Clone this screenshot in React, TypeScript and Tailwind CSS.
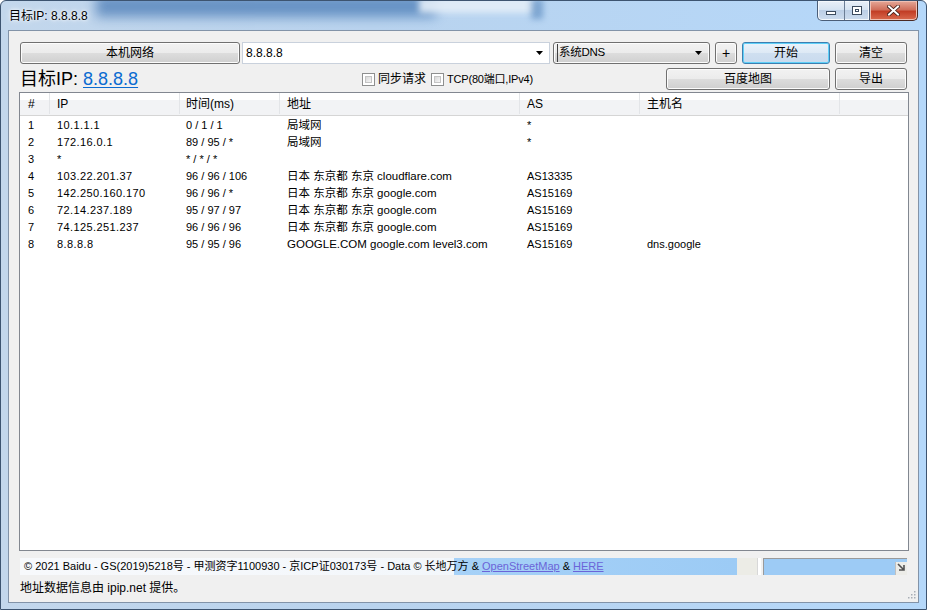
import React from 'react';

const FONT = "font-['Liberation_Sans','Noto_Sans_CJK_SC',sans-serif]";
const BTN =
  'flex items-center justify-center rounded-[3px] border border-[#707070] bg-[linear-gradient(#f2f2f2,#ebebeb_50%,#dddddd_50%,#cfcfcf)] shadow-[inset_0_0_0_1px_#fcfcfc] text-[12px] text-black';

const cols = [
  { label: '#', w: 'w-[30px] pl-[8px]' },
  { label: 'IP', w: 'w-[130px] pl-[7px]' },
  { label: '时间(ms)', w: 'w-[100px] pl-[6px]' },
  { label: '地址', w: 'w-[240px] pl-[7px]' },
  { label: 'AS', w: 'w-[120px] pl-[7px]' },
  { label: '主机名', w: 'w-[200px] pl-[7px]' },
];

const rows = [
  ['1', '10.1.1.1', '0 / 1 / 1', '局域网', '*', ''],
  ['2', '172.16.0.1', '89 / 95 / *', '局域网', '*', ''],
  ['3', '*', '* / * / *', '', '', ''],
  ['4', '103.22.201.37', '96 / 96 / 106', '日本 东京都 东京 cloudflare.com', 'AS13335', ''],
  ['5', '142.250.160.170', '96 / 96 / *', '日本 东京都 东京 google.com', 'AS15169', ''],
  ['6', '72.14.237.189', '95 / 97 / 97', '日本 东京都 东京 google.com', 'AS15169', ''],
  ['7', '74.125.251.237', '96 / 96 / 96', '日本 东京都 东京 google.com', 'AS15169', ''],
  ['8', '8.8.8.8', '95 / 95 / 96', 'GOOGLE.COM google.com level3.com', 'AS15169', 'dns.google'],
];

const Arrow = () => (
  <svg width="7" height="4" viewBox="0 0 7 4">
    <path d="M0 0h7L3.5 4z" fill="#000" />
  </svg>
);

const CheckBox = ({ label, cls }: { label: string; cls: string }) => (
  <div className="flex items-center gap-[3px]">
    <div className="w-[13px] h-[13px] border border-[#8e8f8f] bg-white p-[2px]">
      <div className="w-full h-full border border-[#c4c4c4] bg-[linear-gradient(135deg,#d8d8d8,#f6f6f6)]" />
    </div>
    <span className={cls}>{label}</span>
  </div>
);

function TitleBar() {
  return (
    <div className="relative h-[29px] flex items-start">
      <div className="absolute left-[95px] top-[-6px] w-[340px] h-[22px] bg-[#3a6fae] opacity-65 blur-[6px]" />
      <div className="absolute left-[418px] top-[-4px] w-[116px] h-[16px] bg-[#e4eef8] opacity-90 blur-[3px]" />
      <div className="absolute left-[530px] top-[-2px] w-[12px] h-[20px] bg-[#3e74b0] opacity-50 blur-[3px]" />
      <span className="relative mt-[6px] ml-[8px] text-[12px] text-black [text-shadow:0_0_6px_#ffffff,0_0_3px_#ffffff]">
        目标IP: 8.8.8.8
      </span>
      <div className="relative ml-auto mr-[8px] flex h-[20px]">
        <div className="flex w-[53px] border border-t-0 border-[#4b5e78] rounded-bl-[5px] overflow-hidden bg-[linear-gradient(#e9f0f8,#d4e2f1_50%,#bccfe6_50%,#cddcee)] shadow-[inset_0_0_0_1px_#f4f8fc]">
          <div className="w-[27px] flex items-center justify-center border-r border-[#6b7d95]">
            <div className="w-[10px] h-[4px] border border-[#3c4b5e] bg-white mt-[5px]" />
          </div>
          <div className="flex-1 flex items-center justify-center">
            <div className="w-[10px] h-[9px] border border-[#3c4b5e] bg-white">
              <div className="mt-[2px] mx-[2px] h-[3px] border border-[#3c4b5e]" />
            </div>
          </div>
        </div>
        <div className="w-[48px] flex items-center justify-center border border-t-0 border-l-0 border-[#4b2a24] rounded-br-[5px] bg-[linear-gradient(#e5a898,#d0705c_45%,#c23e26_55%,#d96a4e)] shadow-[inset_0_0_0_1px_#eec0b4]">
          <svg width="13" height="11" viewBox="0 0 13 11">
            <path d="M2 1.5l9 8M11 1.5l-9 8" stroke="#3b1a14" strokeWidth="3.6" strokeLinecap="square" />
            <path d="M2 1.5l9 8M11 1.5l-9 8" stroke="#ffffff" strokeWidth="2" strokeLinecap="square" />
          </svg>
        </div>
      </div>
    </div>
  );
}

export default function App() {
  return (
    <div
      className={`w-[927px] h-[610px] flex flex-col overflow-hidden rounded-t-[6px] border border-[#3d5470] bg-[linear-gradient(to_right,#c3d7ec,#b9d3ee_40%,#b5d8fa)] ${FONT}`}
    >
      <TitleBar />
      <div className="mx-[7px] h-[573px] flex flex-col border border-[#8293a8] bg-[#f0f0f0] px-[11px]">
        {/* top row */}
        <div className="mt-[11px] flex h-[22px]">
          <div className={`${BTN} w-[220px]`}>本机网络</div>
          <div className="ml-[2px] w-[308px] flex items-center border border-[#c9d1dc] bg-white pl-[3px] pr-[6px] text-[12px]">
            <span>8.8.8.8</span>
            <span className="ml-auto">
              <Arrow />
            </span>
          </div>
          <div className={`${BTN} ml-[3px] w-[157px] justify-start pl-[3px] pr-[7px]`}>
            <span className="border-l border-[#404040] pl-[1px] text-[11.5px] tracking-[-0.3px]">系统DNS</span>
            <span className="ml-auto">
              <Arrow />
            </span>
          </div>
          <div className={`${BTN} ml-[5px] w-[22px] text-[14px] text-[#101860]`}>+</div>
          <div className="ml-[5px] w-[88px] flex items-center justify-center rounded-[3px] border border-[#3c7fb1] bg-[linear-gradient(#eaf3fb,#dde9f5_50%,#cfdff0_50%,#c9dbee)] shadow-[inset_0_0_0_1px_#5fd0f8] text-[12px]">
            开始
          </div>
          <div className={`${BTN} ml-[5px] w-[72px]`}>清空</div>
        </div>

        {/* second row */}
        <div className="mt-[4px] flex h-[22px] items-center">
          <div className="w-[330px] text-[18px] leading-none whitespace-nowrap">
            目标IP: <span className="text-[#0b6bd1] underline underline-offset-[2px]">8.8.8.8</span>
          </div>
          <div className="ml-[12px] flex items-center gap-[5px]">
            <CheckBox label="同步请求" cls="text-[12px]" />
            <CheckBox label="TCP(80端口,IPv4)" cls="text-[11px] tracking-[-0.2px]" />
          </div>
          <div className={`${BTN} ml-auto w-[164px] h-[22px]`}>百度地图</div>
          <div className={`${BTN} ml-[5px] w-[72px] h-[22px]`}>导出</div>
        </div>

        {/* list view */}
        <div className="mt-[2px] -ml-[1px] w-[890px] h-[459px] border border-[#828790] bg-white">
          <div className="flex h-[23px] pb-[1px] border-b border-[#d5d5d5] bg-[linear-gradient(#ffffff,#ffffff_30%,#f2f3f5_30%,#f2f3f5)] text-[12px]">
            {cols.map((c) => (
              <div key={c.label} className={`${c.w} flex items-center border-r border-[#e3e5e8]`}>
                {c.label}
              </div>
            ))}
          </div>
          <div className="pt-[1px] text-[11px]">
            {rows.map((r) => (
              <div key={r[0]} className="flex h-[17px] items-center whitespace-nowrap">
                <div className="w-[30px] pl-[8px]">{r[0]}</div>
                <div className="w-[130px] pl-[7px] tracking-[0.4px]">{r[1]}</div>
                <div className="w-[100px] pl-[6px]">{r[2]}</div>
                <div className="w-[240px] pl-[7px] text-[11.5px]">{r[3]}</div>
                <div className="w-[120px] pl-[7px]">{r[4]}</div>
                <div className="w-[200px] pl-[7px]">{r[5]}</div>
              </div>
            ))}
          </div>
        </div>

        {/* map copyright strip */}
        <div className="mt-[7px] flex h-[17px] items-stretch">
          <div className="w-[717px] flex items-center pl-[4px] text-[11px] text-black whitespace-nowrap bg-[linear-gradient(to_right,#f7f9fc,#f3f7fb_434px,#a6d1f7_434px,#9ccbf5)]">
            © 2021 Baidu - GS(2019)5218号 - 甲测资字1100930 - 京ICP证030173号 - Data © 长地万方 &amp;{' '}
            <span className="mx-[3px] text-[#6b64d8] underline">OpenStreetMap</span>&amp;
            <span className="ml-[3px] text-[#6b64d8] underline">HERE</span>
          </div>
          <div className="w-[20px] bg-[#ecece6]" />
          <div className="w-[4px] bg-white border-l border-[#d8d8d8]" />
          <div className="ml-[2px] flex-1 flex border-t border-l border-[#9a9a9a] bg-[#9dcbf5]">
            <div className="ml-auto w-[12px] mt-[3px] flex items-start justify-center bg-[#ecece8] border-l border-[#c0c0c0]">
              <svg width="9" height="9" viewBox="0 0 9 9" className="mt-[1px]">
                <path d="M1 1l6 6M7 2v5H2" stroke="#505050" strokeWidth="1.6" fill="none" />
              </svg>
            </div>
          </div>
        </div>

        <div className="mt-[4px] flex h-[17px] items-center text-[12px]">
          地址数据信息由 ipip.net 提供。
          <div className="ml-auto -mr-[9px] mt-[12px]">
            <svg width="10" height="10" viewBox="0 0 10 10">
              <g fill="#a8aeb6">
                <rect x="8" y="2" width="1.5" height="1.5" />
                <rect x="5" y="5" width="1.5" height="1.5" />
                <rect x="8" y="5" width="1.5" height="1.5" />
                <rect x="2" y="8" width="1.5" height="1.5" />
                <rect x="5" y="8" width="1.5" height="1.5" />
                <rect x="8" y="8" width="1.5" height="1.5" />
              </g>
            </svg>
          </div>
        </div>
      </div>
    </div>
  );
}
